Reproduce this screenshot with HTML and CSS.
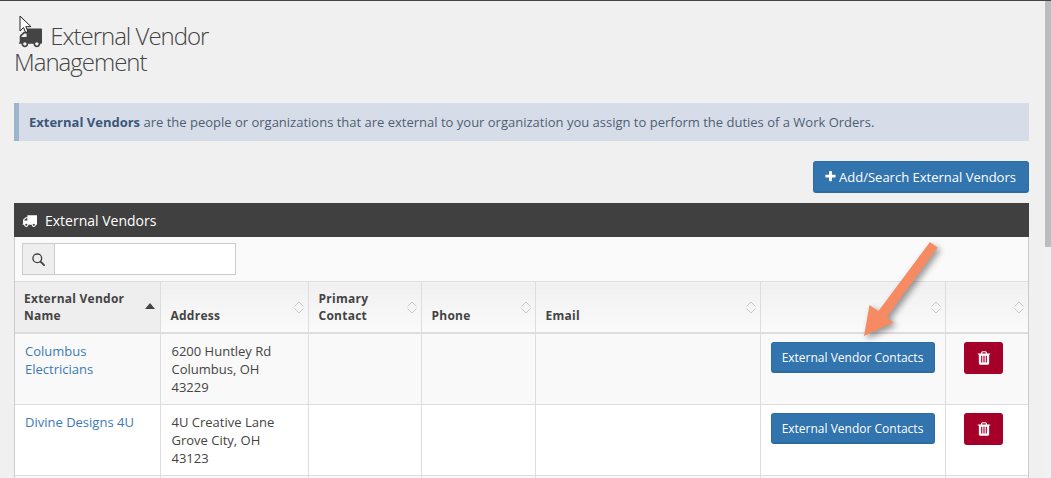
FILE: index.html
```html
<!DOCTYPE html>
<html lang="en">
<head>
<meta charset="utf-8">
<title>External Vendor Management</title>
<link rel="stylesheet" href="styles.css">
</head>
<body>
<svg width="0" height="0" class="defs">
  <symbol id="truck" viewBox="0 0 1792 1792"><path d="M640 1408q0-52-38-90t-90-38-90 38-38 90 38 90 90 38 90-38 38-90zm-384-512h384v-256h-158q-13 0-22 9l-195 195q-9 9-9 22v30zm1280 512q0-52-38-90t-90-38-90 38-38 90 38 90 90 38 90-38 38-90zm256-1088v1024q0 15-4 26.500t-13.500 18.500-16.500 11.500-23.500 6-22.500 2-25.500 0-22.500-.5q0 106-75 181t-181 75-181-75-75-181h-384q0 106-75 181t-181 75-181-75-75-181h-64q-3 0-22.500.5t-25.500 0-22.500-2-23.500-6-16.500-11.500-13.500-18.500-4-26.500q0-26 19-45t45-19v-320q0-8-.5-35t0-38 2.500-34.500 6.500-37 14-30.500 22.500-30l198-198q19-19 50.500-32t58.500-13h160v-192q0-26 19-45t45-19h1024q26 0 45 19t19 45z"/></symbol>
  <symbol id="search" viewBox="0 0 14 14"><circle cx="5.700" cy="5.700" r="4.700" fill="none" stroke="#444" stroke-width="1.500"/><path d="M9.200 9.200 13 13" fill="none" stroke="#444" stroke-width="2" stroke-linecap="round"/></symbol>
  <symbol id="plus" viewBox="0 0 1792 1792"><path d="M1600 736v192q0 40-28 68t-68 28h-416v416q0 40-28 68t-68 28h-192q-40 0-68-28t-28-68v-416h-416q-40 0-68-28t-28-68v-192q0-40 28-68t68-28h416v-416q0-40 28-68t68-28h192q40 0 68 28t28 68v416h416q40 0 68 28t28 68z"/></symbol>
  <symbol id="trash" viewBox="0 0 1792 1792"><path d="M704 1376v-704q0-14-9-23t-23-9h-64q-14 0-23 9t-9 23v704q0 14 9 23t23 9h64q14 0 23-9t9-23zm256 0v-704q0-14-9-23t-23-9h-64q-14 0-23 9t-9 23v704q0 14 9 23t23 9h64q14 0 23-9t9-23zm256 0v-704q0-14-9-23t-23-9h-64q-14 0-23 9t-9 23v704q0 14 9 23t23 9h64q14 0 23-9t9-23zm-544-992h448l-48-117q-7-9-17-11h-317q-10 2-17 11zm928 32v64q0 14-9 23t-23 9h-96v948q0 83-47 143.500t-113 60.500h-832q-66 0-113-58.500t-47-141.500v-952h-96q-14 0-23-9t-9-23v-64q0-14 9-23t23-9h309l70-167q15-37 54-63t79-26h320q40 0 79 26t54 63l70 167h309q14 0 23 9t9 23z"/></symbol>
  <symbol id="sort" viewBox="0 0 10 13"><path d="M.5 5.500 5 1l4.500 4.500M.5 7.500 5 12l4.500-4.500" fill="none" stroke="#c8c8c8" stroke-width="1"/></symbol>
</svg>

<div class="page">
  <main class="content">
    <h1 class="title"><svg class="title-icon"><use href="#truck"/></svg> External Vendor Management</h1>

    <p class="alert"><strong>External Vendors</strong> are the people or organizations that are external to your organization you assign to perform the duties of a Work Orders.</p>

    <div class="actions">
      <button class="btn btn-add"><svg class="btn-plus"><use href="#plus"/></svg>Add/Search External Vendors</button>
    </div>

    <section class="panel">
      <h2 class="panel-head"><svg class="panel-icon"><use href="#truck"/></svg>External Vendors</h2>
      <div class="panel-search">
        <div class="search-group">
          <span class="search-addon"><svg class="search-icon"><use href="#search"/></svg></span>
          <span class="search-input"></span>
        </div>
      </div>
      <table class="grid">
        <colgroup>
          <col class="c1"><col class="c2"><col class="c3"><col class="c4"><col class="c5"><col class="c6"><col class="c7">
        </colgroup>
        <thead>
          <tr>
            <th class="sorted">External Vendor Name<span class="caret"></span></th>
            <th>Address<svg class="sort"><use href="#sort"/></svg></th>
            <th>Primary Contact<svg class="sort"><use href="#sort"/></svg></th>
            <th>Phone<svg class="sort"><use href="#sort"/></svg></th>
            <th>Email<svg class="sort"><use href="#sort"/></svg></th>
            <th><svg class="sort"><use href="#sort"/></svg></th>
            <th><svg class="sort"><use href="#sort"/></svg></th>
          </tr>
        </thead>
        <tbody>
          <tr class="odd">
            <td><a href="#">Columbus Electricians</a></td>
            <td>6200 Huntley Rd<br>Columbus, OH<br>43229</td>
            <td></td><td></td><td></td>
            <td class="act"><button class="btn btn-contacts">External Vendor Contacts</button></td>
            <td class="act"><button class="btn btn-trash"><svg class="trash-icon"><use href="#trash"/></svg></button></td>
          </tr>
          <tr>
            <td><a href="#">Divine Designs 4U</a></td>
            <td>4U Creative Lane<br>Grove City, OH<br>43123</td>
            <td></td><td></td><td></td>
            <td class="act"><button class="btn btn-contacts">External Vendor Contacts</button></td>
            <td class="act"><button class="btn btn-trash"><svg class="trash-icon"><use href="#trash"/></svg></button></td>
          </tr>
          <tr class="odd">
            <td>&nbsp;</td><td>&nbsp;</td><td></td><td></td><td></td><td></td><td></td>
          </tr>
        </tbody>
      </table>
    </section>
  </main>
  <div class="scrollbar"><div class="thumb"></div></div>
</div>

<svg class="arrow" viewBox="0 0 90 110" width="90" height="110">
  <polygon points="76,6 83.500,11.500 33,81 39.500,86.500 10,100 15.500,69 24.500,75" fill="#f58a63"/>
</svg>
<svg class="cursor" viewBox="0 0 14 19" width="14" height="19">
  <path d="M1 1v15l3.500-3.500 2.200 5 2.300-1-2.200-4.800H12z" fill="#fff" stroke="#222" stroke-width="1"/>
</svg>
</body>
</html>
```
FILE: styles.css
```css
* { box-sizing: border-box; }
html, body { margin: 0; height: 478px; overflow: hidden; }
body {
  position: relative;
  font-family: "Open Sans", sans-serif;
  font-size: 13px;
  line-height: 18px;
  color: #444;
  background: #f0f0f0;
  border-top: 1px solid #444;
}
.defs { position: absolute; }
.page { display: flex; height: 477px; }
.content { width: 1045px; padding: 0 16px 0 14px; flex: none; }

.scrollbar { width: 6px; flex: none; background: #f1f1f1; }
.thumb { height: 246px; background: #bcbcbc; }

.title {
  margin: 0;
  padding: 22px 0 0;
  width: 215px;
  font-weight: 300;
  font-size: 24px;
  line-height: 26px;
  letter-spacing: -1px;
  color: #444;
}
.title-icon { width: 24px; height: 24px; margin: 0 3px 0 4px; vertical-align: -4px; fill: #444; }

.alert {
  margin: 28px 0 0;
  height: 38px;
  padding: 10px 10px;
  border-left: 5px solid #9db5cc;
  background: #d6dde8;
  color: #4f5f73;
}
.alert strong { color: #3c5679; font-weight: 700; }

.actions { display: flex; justify-content: flex-end; margin-top: 20px; }

.btn {
  display: inline-flex;
  align-items: center;
  justify-content: center;
  border: 1px solid #2d6ca2;
  border-bottom-width: 2px;
  border-radius: 3px;
  color: #fff;
  background: #3174ae;
  font-family: inherit;
  padding: 0;
}
.btn-add { width: 216px; height: 32px; font-size: 13px; padding-right: 2px; }
.btn-plus { width: 13px; height: 13px; margin-right: 2px; fill: #fff; }

.panel { margin-top: 10px; border: solid #ccc; border-width: 0 1px; }
.panel-head {
  margin: 0 -1px;
  height: 34px;
  display: flex;
  align-items: center;
  padding: 1px 0 0 8px;
  background: #404040;
  color: #fff;
  font-size: 14px;
  font-weight: 400;
}
.panel-icon { width: 15px; height: 15px; margin-right: 8px; fill: #fff; }

.panel-search { height: 44px; padding: 6px 7px; background: #fafafa; }
.search-group { display: flex; width: 214px; height: 32px; border: 1px solid #ccc; background: #fff; }
.search-addon { width: 32px; display: flex; align-items: center; justify-content: center; background: #eee; border-right: 1px solid #ccc; }
.search-icon { width: 13px; height: 13px; }
.search-input { flex: 1; }

.grid { width: 1013px; border-collapse: collapse; table-layout: fixed; border-top: 1px solid #ddd; }
.c1 { width: 145px; }
.c2 { width: 148px; }
.c3 { width: 113px; }
.c4 { width: 114px; }
.c5 { width: 225px; }
.c6 { width: 185px; }
.c7 { width: 83px; }

.grid th {
  position: relative;
  height: 50px;
  padding: 8px 26px 8px 10px;
  vertical-align: bottom;
  text-align: left;
  font-size: 12px;
  font-weight: 700;
  line-height: 17px;
  letter-spacing: 0.25px;
  color: #444;
  background: linear-gradient(#f0f0f0, #fafafa);
  border-left: 1px solid #ddd;
  border-right: 1px solid #ddd;
  border-bottom: 2px solid #ddd;
}
.grid th.sorted { background: #eee; padding-left: 9px; }
.grid th:first-child, .grid td:first-child { border-left: 0; }
.grid th:last-child, .grid td:last-child { border-right: 0; }

.sort { position: absolute; right: 4px; top: 19px; width: 10px; height: 13px; }
.caret {
  position: absolute;
  right: 5px;
  top: 21px;
  border: solid transparent;
  border-width: 0 5px 6px;
  border-bottom-color: #444;
}

.grid td {
  height: 71px;
  padding: 8px 10px 8px 11px;
  vertical-align: top;
  background: #fff;
  border: 1px solid #ddd;
  color: #444;
}
.grid td:first-child { padding-left: 10px; }
.grid .odd td { background: #f9f9f9; }
.grid a { color: #3c7ab5; text-decoration: none; }
.grid .act { padding: 8px 10px; }

.btn-contacts { width: 164px; height: 31px; font-size: 12px; }
.btn-trash { width: 39px; height: 32px; margin-left: 8px; padding-left: 1px; background: #a5002a; border-color: #a5002a; }
.trash-icon { width: 16px; height: 16px; fill: #fff; }

.arrow {
  position: absolute;
  left: 854px;
  top: 235px;
  filter: drop-shadow(3px 3px 3px rgba(0, 0, 0, 0.4));
}
.cursor { position: absolute; left: 19px; top: 14px; }
```
